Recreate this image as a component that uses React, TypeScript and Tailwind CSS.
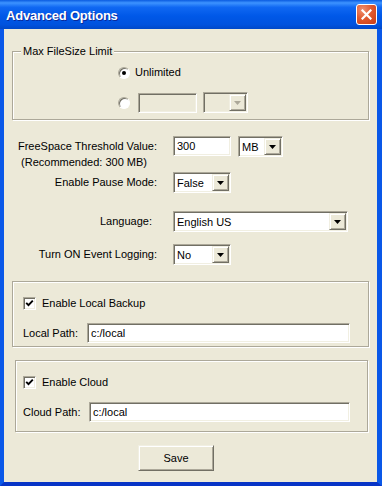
import React from "react";

const sunken =
  "border border-t-[#ACA899] border-l-[#ACA899] border-r-white border-b-white shadow-[inset_1px_1px_0_#716F64,inset_-1px_-1px_0_#F1EFE2]";
const raised =
  "border border-t-[#F1EFE2] border-l-[#F1EFE2] border-r-[#716F64] border-b-[#716F64] shadow-[inset_1px_1px_0_#fff,inset_-1px_-1px_0_#ACA899]";

function Arrow({ disabled }: { disabled?: boolean }) {
  return (
    <svg width="7" height="4" viewBox="0 0 7 4">
      <path d="M0 0 H7 L3.5 4 Z" fill={disabled ? "#ACA899" : "#000"} />
    </svg>
  );
}

function Combo({ value, w, disabled }: { value: string; w: string; disabled?: boolean }) {
  return (
    <div className={`${w} h-[21px] flex items-stretch ${sunken} ${disabled ? "bg-[#ECE9D8]" : "bg-white"} p-[1px]`}>
      <span className="flex-1 flex items-center pl-[2px] pt-[1px] overflow-hidden whitespace-nowrap">{value}</span>
      <span className={`w-[17px] flex items-center justify-center bg-[#ECE9D8] ${raised}`}>
        <Arrow disabled={disabled} />
      </span>
    </div>
  );
}

function TextBox({ value, w, disabled }: { value: string; w: string; disabled?: boolean }) {
  return (
    <div className={`${w} h-[20px] flex items-center pl-[3px] pt-[1px] ${sunken} ${disabled ? "bg-[#ECE9D8]" : "bg-white"}`}>
      {value}
    </div>
  );
}

function Radio({ checked }: { checked?: boolean }) {
  return (
    <span className="w-[12px] h-[12px] rounded-full bg-white border border-t-[#ACA899] border-l-[#ACA899] border-r-white border-b-white shadow-[inset_1px_1px_0_#716F64] flex items-center justify-center">
      {checked && <span className="w-[4px] h-[4px] rounded-full bg-black" />}
    </span>
  );
}

function CheckBox() {
  return (
    <span className={`w-[13px] h-[13px] bg-white flex items-center justify-center ${sunken}`}>
      <svg width="9" height="9" viewBox="0 0 9 9">
        <path d="M1.2 3.8 L3.5 6.2 L7.8 1.6" stroke="#000" strokeWidth="1.9" fill="none" />
      </svg>
    </span>
  );
}

function Group({ className, children, label }: { className: string; children: React.ReactNode; label?: string }) {
  return (
    <div className={`relative border border-[#ACA899] shadow-[inset_1px_1px_0_#fff,1px_1px_0_#fff] ${className}`}>
      {label && (
        <span className="absolute left-[8px] top-[-8px] bg-[#ECE9D8] px-[2px] leading-[14px]">{label}</span>
      )}
      {children}
    </div>
  );
}

export default function App() {
  return (
    <div className="w-[382px] h-[486px] flex flex-col font-['Liberation_Sans',Arial,sans-serif] text-[11px] text-black">
      {/* title bar */}
      <div className="h-[29px] shrink-0 flex items-center justify-between pl-[6px] pr-[5px] bg-[linear-gradient(180deg,#0A5BE0_0%,#3D93FF_10%,#1068F2_25%,#0058E8_55%,#0052DE_85%,#0048C8_100%)]">
        <span className="text-white font-bold text-[13px] pt-[2px] tracking-[-0.2px] [text-shadow:1px_1px_0_#0A2A9A]">Advanced Options</span>
        <span className="w-[21px] h-[21px] rounded-[3px] border border-white flex items-center justify-center bg-[radial-gradient(circle_at_30%_25%,#F09070_0%,#E05A30_45%,#C83C14_100%)]">
          <svg width="11" height="11" viewBox="0 0 11 11">
            <path d="M1.5 1.5 L9.5 9.5 M9.5 1.5 L1.5 9.5" stroke="#fff" strokeWidth="2.2" strokeLinecap="square" />
          </svg>
        </span>
      </div>

      {/* body */}
      <div className="flex-1 flex flex-col bg-[#ECE9D8] border-l-4 border-r-[5px] border-b-4 border-l-[#0A58E8] border-r-[#0A58E8] border-b-[#0734C6]">
        <Group label="Max FileSize Limit" className="mt-[22px] mx-[8px] h-[69px] pt-[14px]">
          <div className="flex items-center h-[13px] pl-[105px] gap-[5px]">
            <Radio checked />
            <span>Unlimited</span>
          </div>
          <div className="flex items-center mt-[13px] pl-[105px]">
            <Radio />
            <span className="w-[8px]" />
            <TextBox value="" w="w-[59px]" disabled />
            <span className="w-[6px]" />
            <Combo value="" w="w-[45px]" disabled />
          </div>
        </Group>

        <div className="flex items-start mt-[16px]">
          <div className="w-[153px] mt-[2px] leading-[16px] text-right">
            <div>FreeSpace Threshold Value:</div>
            <div className="pr-[10px]">(Recommended: 300 MB)</div>
          </div>
          <div className="ml-[16px] flex gap-[7px]">
            <TextBox value="300" w="w-[58px]" />
            <Combo value="MB" w="w-[45px]" />
          </div>
        </div>

        <div className="flex items-center mt-[2px]">
          <div className="w-[153px] text-right">Enable Pause Mode:</div>
          <div className="ml-[16px]">
            <Combo value="False" w="w-[58px]" />
          </div>
        </div>

        <div className="flex items-center mt-[18px]">
          <div className="w-[153px] text-right pr-[5px]">Language:</div>
          <div className="ml-[16px]">
            <Combo value="English US" w="w-[175px]" />
          </div>
        </div>

        <div className="flex items-center mt-[12px]">
          <div className="w-[153px] text-right">Turn ON Event Logging:</div>
          <div className="ml-[16px]">
            <Combo value="No" w="w-[58px]" />
          </div>
        </div>

        <Group className="mt-[16px] mx-[8px] h-[66px] pt-[15px] pl-[10px]">
          <div className="flex items-center gap-[6px] h-[13px]">
            <CheckBox />
            <span>Enable Local Backup</span>
          </div>
          <div className="flex items-center mt-[13px] pr-[18px]">
            <span className="w-[64px]">Local Path:</span>
            <div className="flex-1">
              <TextBox value="c:/local" w="w-full" />
            </div>
          </div>
        </Group>

        <Group className="mt-[13px] ml-[11px] mr-[9px] h-[72px] pt-[15px] pl-[7px]">
          <div className="flex items-center gap-[6px] h-[13px]">
            <CheckBox />
            <span>Enable Cloud</span>
          </div>
          <div className="flex items-center mt-[13px] pr-[17px]">
            <span className="w-[66px]">Cloud Path:</span>
            <div className="flex-1">
              <TextBox value="c:/local" w="w-full" />
            </div>
          </div>
        </Group>

        <button className={`mt-[13px] ml-[134px] w-[76px] h-[26px] bg-[#ECE9D8] ${raised}`}>Save</button>
      </div>
    </div>
  );
}
